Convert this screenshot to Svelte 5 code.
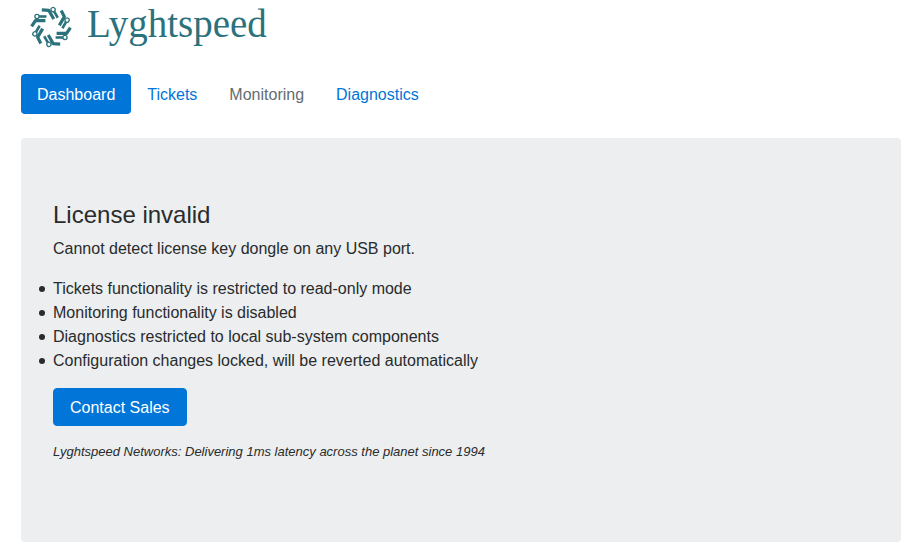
<script>
  const tabs = [
    { label: 'Dashboard', state: 'active' },
    { label: 'Tickets', state: '' },
    { label: 'Monitoring', state: 'disabled' },
    { label: 'Diagnostics', state: '' }
  ];
  const restrictions = [
    'Tickets functionality is restricted to read-only mode',
    'Monitoring functionality is disabled',
    'Diagnostics restricted to local sub-system components',
    'Configuration changes locked, will be reverted automatically'
  ];
  const arms = [0, 60, 120, 180, 240, 300];
</script>

<div class="page">
  <header class="brand">
    <svg class="mark" viewBox="-21 -21 42 42" aria-hidden="true">
      {#each arms as angle}
        <g transform="rotate({angle})">
          <path class="bar" d="M-19.4 -.6L-15.6 -6.4H-5.6" />
          <path class="stem" d="M-12 -10.5H-4.6" />
          <circle cx="-14" cy="-10.5" r="2.1" />
        </g>
      {/each}
    </svg>
    <span class="name">Lyghtspeed</span>
  </header>

  <nav class="tabs">
    {#each tabs as tab}
      <a class="tab {tab.state}" href="#{tab.label.toLowerCase()}" aria-disabled={tab.state === 'disabled'} aria-current={tab.state === 'active' ? 'page' : undefined}>{tab.label}</a>
    {/each}
  </nav>

  <main class="panel">
    <h1>License invalid</h1>
    <p>Cannot detect license key dongle on any USB port.</p>
    <ul>
      {#each restrictions as item}
        <li>{item}</li>
      {/each}
    </ul>
    <button type="button">Contact Sales</button>
    <p class="tagline">Lyghtspeed Networks: Delivering 1ms latency across the planet since 1994</p>
  </main>
</div>

<style>
  :global(body) {
    margin: 0;
    background: #fff;
  }
  .page {
    padding: 0 14px 14px 21px;
    color: #292b2c;
    font: 16px/24px "Liberation Sans", Arial, sans-serif;
  }
  .brand {
    display: flex;
    align-items: center;
    gap: 15px;
    height: 54px;
    padding-left: 9px;
    margin-bottom: 20px;
    color: #2b727c;
  }
  .mark {
    width: 42px;
    height: 42px;
    fill: none;
    stroke: currentColor;
  }
  .bar {
    stroke-width: 3.2;
    stroke-linejoin: round;
  }
  .stem {
    stroke-width: 2.6;
  }
  circle {
    stroke-width: 1.3;
  }
  .name {
    padding-bottom: 6px;
    font: 39px/44px "Liberation Serif", "Times New Roman", serif;
  }
  .tabs {
    display: flex;
    margin-bottom: 24px;
  }
  .tab {
    padding: 9px 16px 7px;
    border-radius: 4px;
    color: #0275d8;
    text-decoration: none;
  }
  .tab.active {
    background: #0275d8;
    color: #fff;
  }
  .tab.disabled {
    color: #636c72;
    cursor: not-allowed;
  }
  .panel {
    padding: 64px 32px;
    border-radius: 4px;
    background: #eceeef;
  }
  h1 {
    margin: 0 0 9px;
    font-size: 24px;
    font-weight: 400;
    line-height: 26px;
  }
  p {
    margin: 0 0 16px;
  }
  ul {
    margin: 0 0 15px;
    padding: 0;
    list-style: none;
  }
  li {
    position: relative;
  }
  li::before {
    content: "";
    position: absolute;
    top: 9px;
    left: -14px;
    width: 6px;
    height: 6px;
    border-radius: 50%;
    background: currentColor;
  }
  button {
    display: block;
    margin: 0 0 16px;
    padding: 7px 16px 5px;
    border: 1px solid #0275d8;
    border-radius: 4px;
    background: #0275d8;
    color: #fff;
    font: inherit;
    cursor: pointer;
  }
  .tagline {
    font-size: 13px;
    font-style: italic;
    line-height: 20px;
  }
</style>
